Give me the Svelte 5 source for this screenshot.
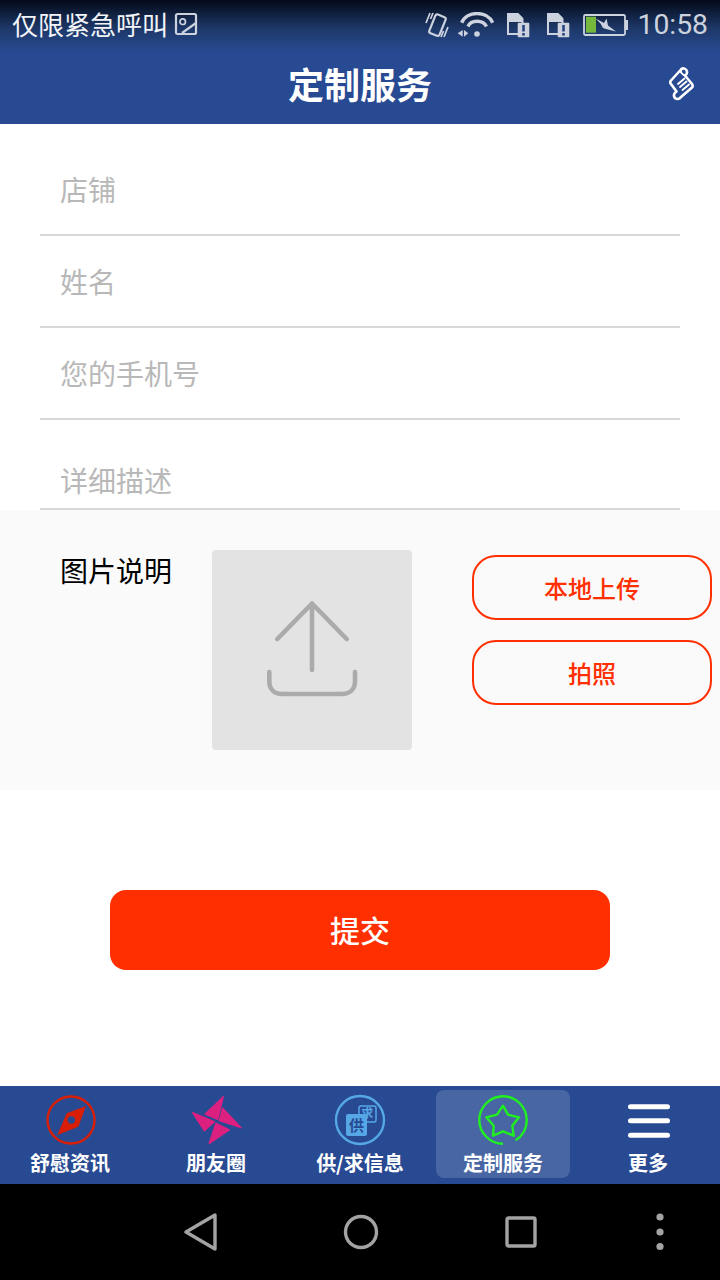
<script>
  const fields = [
    { label: '店铺', cls: 'f1' },
    { label: '姓名', cls: 'f2' },
    { label: '您的手机号', cls: 'f3' },
    { label: '详细描述', cls: 'f4' }
  ];
</script>

<div class="page">
  <header class="top">
    <div class="status">
      <div class="carrier">
        <span>仅限紧急呼叫</span>
        <svg class="pic" width="24" height="24" viewBox="0 0 24 24" fill="none" stroke="#ccd2de" stroke-width="2.200"><rect x="2" y="2" width="20" height="20" rx="1.500"/><circle cx="8.700" cy="9.700" r="2.800" stroke-width="1.700"/><path d="M8 21L22 11"/></svg>
      </div>
      <div class="sysicons">
        <svg class="vib" width="26" height="26" viewBox="0 0 26 26" fill="none" stroke="#ccd2de" stroke-width="2.200"><rect x="8" y="3" width="11" height="20" rx="2" transform="rotate(22 13 13)"/><path d="M6 1L2 11M9 1L6.500 7M24 15L20 25M19.500 19L17 25" stroke-width="1.700"/></svg>
        <svg class="wifi" width="38" height="26" viewBox="0 0 38 26" fill="none" stroke="#ccd2de" stroke-width="3.400"><path d="M4.700 10.700C10 -1.500 30 -1.500 35.700 10.700M11 14.500C14 7.500 26 7.500 29.500 14.500"/><circle cx="20" cy="22" r="2.800" fill="#ccd2de" stroke="none"/><path d="M5.700 18V24.700L0.700 21.300ZM7 18V24.700L11.300 21.300Z" fill="#ccd2de" stroke="none"/></svg>
        <svg class="sim" width="24" height="26" viewBox="0 0 24 26"><path d="M2 2H11.500L16.500 7V22H2Z" fill="none" stroke="#ccd2de" stroke-width="2"/><path d="M1 1H12L17 6V10H1Z" fill="#ccd2de"/><rect x="11.700" y="10.700" width="11.600" height="14.600" rx="1" fill="#ccd2de"/><rect x="16.200" y="13" width="2.600" height="6.500" fill="#27487f"/><rect x="16.200" y="21" width="2.600" height="2.600" fill="#27487f"/></svg>
        <svg class="sim sim2" width="24" height="26" viewBox="0 0 24 26"><path d="M2 2H11.500L16.500 7V22H2Z" fill="none" stroke="#ccd2de" stroke-width="2"/><path d="M1 1H12L17 6V10H1Z" fill="#ccd2de"/><rect x="11.700" y="10.700" width="11.600" height="14.600" rx="1" fill="#ccd2de"/><rect x="16.200" y="13" width="2.600" height="6.500" fill="#27487f"/><rect x="16.200" y="21" width="2.600" height="2.600" fill="#27487f"/></svg>
        <svg class="batt" width="46" height="24" viewBox="0 0 46 24"><rect x="1" y="2" width="41" height="20" rx="1.500" fill="none" stroke="#ccd2de" stroke-width="1.800"/><rect x="42" y="7" width="3" height="10" fill="#ccd2de"/><rect x="3" y="3.700" width="10" height="16" fill="#76b83c"/><path d="M12.500 5.500L21 10L23.500 5.500L25 12.500L33 18.500L23 16L20 15L17.500 10.500Z" fill="#ccd2de"/></svg>
        <span class="time">10:58</span>
      </div>
    </div>
    <div class="titlebar">
      <h1>定制服务</h1>
      <svg class="scroll" width="30" height="38" viewBox="0 0 30 38" fill="none" stroke="#fff" stroke-width="2.600" stroke-linejoin="round" stroke-linecap="round"><path d="M6 15.500L16 4.500C18 2.500 21.500 3.500 22 6.500C22.300 8 21.500 9.500 20 10.500L27 19C28 20.500 28 21.500 27 22.500L16 32C14 35 9.500 34.500 9 31C8.700 29 10 27.500 11.500 26.500L6 19C5 18 5 16.500 6 15.500Z"/><path d="M16 4.500C15 7 17 9.500 20 10.500M13 19L19.500 13.500M15 22L21.500 16.500M17.500 25L24 19.500" stroke-width="1.900"/></svg>
    </div>
  </header>

  <main class="content">
    <div class="form">
      {#each fields as field}
        <div class="field {field.cls}"><span>{field.label}</span></div>
      {/each}
    </div>

    <section class="photo">
      <div class="photo-label">图片说明</div>
      <div class="upload">
        <svg width="92" height="98" viewBox="0 0 92 98" fill="none" stroke="#ababab" stroke-width="4.600" stroke-linecap="round" stroke-linejoin="round"><path d="M11.300 38L46 2.500L80.700 38M46 2.500V69"/><path d="M3.300 71V80C3.300 89 9 93 16 93H76C83 93 89 89 89 80V71"/></svg>
      </div>
      <div class="actions">
        <button>本地上传</button>
        <button>拍照</button>
      </div>
    </section>

    <div class="submit-wrap"><button class="submit">提交</button></div>
  </main>

  <nav class="tabs">
    <div class="tab">
      <svg width="52" height="52" viewBox="0 0 52 52"><circle cx="26" cy="26" r="23.500" fill="none" stroke="#d81e06" stroke-width="2.400"/><path d="M41 12L33.300 32.700L12.300 41L21.700 19.300Z" fill="#d81e06"/><circle cx="26.300" cy="26" r="3.700" fill="#284a92"/></svg>
      <span>舒慰资讯</span>
    </div>
    <div class="tab">
      <svg width="52" height="52" viewBox="0 0 52 52" fill="#dc2080" stroke="#dc2080" stroke-width="1.400" stroke-linejoin="round"><path d="M33.300 2.700L15.300 20L27.700 25.300Z"/><path d="M51 33.700L32.700 14.300L29.300 26.700Z"/><path d="M19.300 49.300L26 29.300L39.300 36Z"/><path d="M2.700 18.700L24.300 27.700L14.300 36.700Z"/></svg>
      <span>朋友圈</span>
    </div>
    <div class="tab">
      <svg width="52" height="52" viewBox="0 0 52 52"><circle cx="26" cy="26" r="24" fill="none" stroke="#55a7e6" stroke-width="2.400"/><rect x="25" y="12" width="17" height="16" rx="2" fill="none" stroke="#55a7e6" stroke-width="1.500"/><text x="33.300" y="23.500" font-size="12" text-anchor="middle" fill="#55a7e6" class="svgt">求</text><rect x="12" y="20" width="21" height="22" rx="2" fill="#55a7e6"/><text x="22.500" y="36.500" font-size="15" text-anchor="middle" fill="#284a92" class="svgt">供</text></svg>
      <span>供/求信息</span>
    </div>
    <div class="tab active">
      <svg width="52" height="52" viewBox="0 0 52 52" fill="none" stroke="#20f020" stroke-width="2.400"><path d="M26 49.800C13 49.800 2.300 39 2.300 26C2.300 13 13 2.300 26 2.300C39 2.300 49.700 13 49.700 26C49.700 35 45 42.500 38.500 46.200"/><path d="M26 11.700L31 20.700L42 23.300L35.300 31.700L36.700 41.700L26 37.300L16 41.700L16.700 31.700L9.300 23.300L20 20.700Z" stroke-linejoin="round"/></svg>
      <span>定制服务</span>
    </div>
    <div class="tab">
      <svg width="52" height="52" viewBox="0 0 52 52" stroke="#fff" stroke-width="5" stroke-linecap="round"><path d="M8.500 12.700H45.500M8.500 26.700H45.500M8.500 41.300H45.500"/></svg>
      <span>更多</span>
    </div>
  </nav>

  <footer class="sysnav">
    <svg width="34" height="38" viewBox="0 0 34 38" fill="none" stroke="#a3a3a3" stroke-width="3.400" stroke-linejoin="round"><path d="M31 2V36L2 19Z"/></svg>
    <svg width="36" height="36" viewBox="0 0 36 36" fill="none" stroke="#a3a3a3" stroke-width="3.400"><circle cx="18" cy="18" r="15.500"/></svg>
    <svg width="32" height="32" viewBox="0 0 32 32" fill="none" stroke="#a3a3a3" stroke-width="3.400" stroke-linejoin="round"><rect x="2" y="2" width="28" height="28" rx="1.500"/></svg>
    <svg width="8" height="38" viewBox="0 0 8 38" fill="#a3a3a3"><circle cx="4" cy="4" r="3.600"/><circle cx="4" cy="19" r="3.600"/><circle cx="4" cy="33.500" r="3.600"/></svg>
  </footer>
</div>

<style>
  :global(body) { margin: 0; background: #fff; }
  .page {
    width: 720px;
    height: 1280px;
    display: flex;
    flex-direction: column;
    font-family: "Noto Sans CJK SC", "Liberation Sans", sans-serif;
    overflow: hidden;
  }
  .top {
    height: 124px;
    background: linear-gradient(#040a18 0, #1d3767 28px, #284a92 52px, #284a92 100%);
    flex: none;
  }
  .status {
    height: 48px;
    display: flex;
    justify-content: space-between;
    align-items: center;
    padding: 2px 12px 0;
    box-sizing: border-box;
  }
  .carrier { display: flex; align-items: center; gap: 6px; color: #f2f4f8; font-size: 26px; margin-top: -2px; }
  .carrier span { line-height: 46px; }
  .sysicons { display: flex; align-items: center; }
  .sysicons .wifi { margin-left: 7px; }
  .sysicons .sim { margin-left: 11px; }
  .sysicons .sim2 { margin-left: 16px; }
  .sysicons .batt { margin-left: 13px; }
  .time { font-family: Roboto, "Liberation Sans", sans-serif; font-size: 28.300px; color: #ccd2de; margin-left: 9px; line-height: 46px; }
  .titlebar { height: 76px; box-sizing: border-box; padding-bottom: 6px; position: relative; display: flex; align-items: center; justify-content: center; }
  .titlebar h1 { margin: 0; font-size: 36px; font-weight: 700; color: #fff; line-height: 70px; }
  .scroll { position: absolute; right: 25px; top: 17px; }

  .content { flex: 1; display: flex; flex-direction: column; min-height: 0; }
  .form { padding: 20px 40px 0; height: 386px; box-sizing: border-box; }
  .field {
    height: 92px;
    border-bottom: 2px solid #d8d8d8;
    box-sizing: border-box;
    padding-left: 20px;
    display: flex;
    align-items: center;
    color: #b8b8b8;
    font-size: 28px;
  }
  .f4 { height: 90px; padding-top: 32px; }
  .photo {
    height: 280px;
    background: #fafafa;
    display: flex;
    box-sizing: border-box;
    padding: 40px 8px 0 60px;
  }
  .photo-label { width: 152px; font-size: 28px; font-weight: 400; color: #000; line-height: 40px; flex: none; }
  .upload {
    width: 200px;
    height: 200px;
    border-radius: 4px;
    background: #e3e3e3;
    display: flex;
    align-items: center;
    justify-content: center;
    flex: none;
  }
  .actions { margin-left: 60px; padding-top: 5px; display: flex; flex-direction: column; gap: 20px; }
  .actions button {
    width: 240px;
    height: 65px;
    border: 2px solid #ff2f00;
    border-radius: 24px;
    background: transparent;
    color: #ff2f00;
    font: 500 24px "Noto Sans CJK SC", sans-serif;
    padding: 0;
  }
  .submit-wrap { flex: 1; display: flex; justify-content: center; padding-top: 100px; }
  .submit {
    width: 500px;
    height: 80px;
    border: 0;
    border-radius: 16px;
    background: #ff2f00;
    color: #fff;
    font: 500 30px "Noto Sans CJK SC", sans-serif;
    padding: 0 0 2px;
  }

  .tabs {
    height: 98px;
    background: #284a92;
    display: grid;
    grid-template-columns: 140px 152px 136px 142px 150px;
    flex: none;
    padding-top: 4px;
    box-sizing: border-box;
  }
  .tab {
    height: 88px;
    display: flex;
    flex-direction: column;
    align-items: center;
    color: #fff;
    font-size: 20px;
    font-weight: 700;
    border-radius: 8px;
  }
  .tab svg { margin-top: 4px; flex: none; }
  .tab span { line-height: 24px; margin-top: 5px; white-space: nowrap; }
  .tab:first-child svg { margin-left: 2px; }
  .tab:last-child { padding-left: 6px; }
  .tab.active { background: #4866a3; margin-left: 8px; }
  .sysnav {
    height: 96px;
    background: #000;
    flex: none;
    display: flex;
    align-items: center;
    padding-left: 184px;
  }
  .sysnav svg:nth-child(2) { margin-left: 125px; }
  .sysnav svg:nth-child(3) { margin-left: 126px; }
  .sysnav svg:nth-child(4) { margin-left: 119px; }
  .svgt { font-family: "Noto Sans CJK SC", sans-serif; }
</style>
